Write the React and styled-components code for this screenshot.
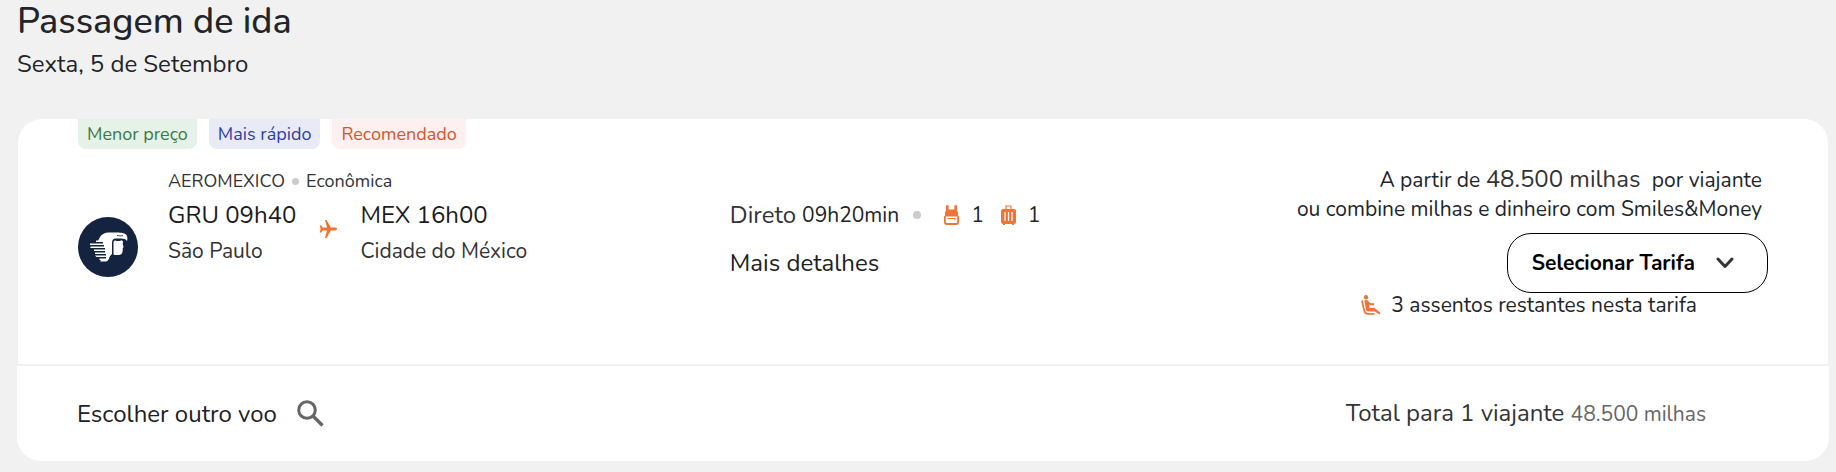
import React from "react";
import styled, { createGlobalStyle } from "styled-components";

const Global = createGlobalStyle`
  * { box-sizing: border-box; }
  body { margin: 0; background: #f1f1f1; color: #212529; font-family: Nunito, Lato, "Liberation Sans", sans-serif; }
  h1, h2, p { margin: 0; font-weight: 400; }
  svg { display: block; flex: none; }
`;

const Page = styled.main`
  padding: 0 7px 11px 17px;
`;
const Heading = styled.header`
  height: 119px;
`;
const Title = styled.h1`
  font-size: 36px;
  font-weight: 500;
  line-height: 43px;
`;
const Subtitle = styled.p`
  font-size: 24px;
  line-height: 43px;
`;
const Body = styled.section`
  min-height: 245px;
  margin: 0 1px;
  padding: 0 60px;
  background: #fff;
  border-radius: 24px 24px 0 0;
`;
const Badges = styled.div`
  display: flex;
  gap: 12px;
`;
const tones = {
  green: ["#e6f1e8", "#3b7a45"],
  blue: ["#e8eaf6", "#2d3fa5"],
  red: ["#fdf0f1", "#d4562c"],
};
const Badge = styled.span`
  padding: 0 9px;
  border-radius: 0 0 8px 8px;
  font-size: 18px;
  line-height: 30px;
  background: ${(p) => tones[p.$tone][0]};
  color: ${(p) => tones[p.$tone][1]};
`;
const Columns = styled.div`
  display: grid;
  grid-template-columns: 5fr 4fr 4fr;
  column-gap: 8px;
  padding-top: 16px;
`;
const Flight = styled.div`
  display: flex;
  gap: 30px;
  padding-top: 1px;
`;
const LogoBox = styled.div`
  padding-top: 51px;
`;
const Airline = styled.div`
  display: flex;
  align-items: center;
  font-size: 18px;
  line-height: 31px;
  color: #333;
`;
const Dot = styled.i`
  width: ${(p) => p.$size}px;
  height: ${(p) => p.$size}px;
  margin: 0 ${(p) => p.$after}px 0 ${(p) => p.$before}px;
  border-radius: 50%;
  background: #ccc;
`;
const Route = styled.div`
  display: flex;
  gap: 23px;
`;
const Time = styled.p`
  font-size: 24px;
  line-height: 36px;
  color: #1c1c1c;
`;
const City = styled.p`
  font-size: 21px;
  line-height: 36px;
  color: #333;
`;
const PlaneBox = styled.div`
  padding-top: 23px;
`;
const Details = styled.div`
  padding-top: 32px;
`;
const Line = styled.div`
  display: flex;
  align-items: center;
  line-height: 36px;
`;
const Stops = styled.span`
  font-size: 24px;
  color: #333;
  margin-right: 6px;
`;
const Small = styled.span`
  font-size: 21px;
`;
const Bag = styled.span`
  display: flex;
  align-items: center;
  gap: 12px;
  margin-right: 17px;
  font-size: 21px;
`;
const PlainLink = styled.a`
  display: inline-flex;
  align-items: center;
  gap: 20px;
  margin-top: ${(p) => p.$top || 0}px;
  font-size: 24px;
  line-height: 36px;
  color: #212121;
  text-decoration: none;
`;
const Price = styled.div`
  display: flex;
  flex-direction: column;
  align-items: flex-end;
`;
const PriceLine = styled.p`
  padding-right: 6px;
  font-size: 21px;
  line-height: 29px;
  white-space: nowrap;
`;
const Miles = styled.strong`
  margin-right: 6px;
  font-size: 24px;
  font-weight: 400;
  color: #333;
`;
const Select = styled.button`
  display: flex;
  align-items: center;
  gap: 21px;
  height: 60px;
  margin-top: 9px;
  padding: 0 33px 0 24px;
  border: 1px solid #000;
  border-radius: 24px;
  background: #fff;
  color: #000;
  font: 700 21px/30px Nunito, Lato, "Liberation Sans", sans-serif;
`;
const Seats = styled.p`
  display: flex;
  align-items: center;
  gap: 10px;
  padding-right: 71px;
  font-size: 21px;
  line-height: 24px;
`;
const Footer = styled.footer`
  display: flex;
  align-items: center;
  justify-content: space-between;
  min-height: 97px;
  padding: 0 123px 0 60px;
  border-top: 2px solid #f1f1f1;
  border-radius: 0 0 24px 24px;
  background: #fff;
`;
const Total = styled.p`
  font-size: 24px;
  line-height: 36px;
  color: #333;
`;
const TotalMiles = styled.span`
  font-size: 21px;
  color: #666;
`;

const Logo = () => (
  <svg width="60" height="60" viewBox="0 0 60 60" role="img" aria-label="Aeromexico">
    <circle cx="30" cy="30" r="30" fill="#14233f" />
    <path
      fill="#fff"
      d="M21 22c1-3 4-6 9-6.500h11c4 .2 7.500 1.500 8 3.500.5 2 .5 3 0 5-1-1.700-3-2.500-6-2.500h-5c-3 0-4 1.500-4 4.500v11c-1.500 1.500-2.500 2.500-3 4.500-.5 1.500-1.500 2.500-3 3h-6l1-1.500h-1.500v-1.500H28V40h-9.500l-1.500-1.500h11V37H17v-1.500h10V34H16v-1.500h11V31H12.500v-1.500H26V28H12v-1.500h13V25h-7v-1.500h2z"
    />
    <path fill="#fff" d="M35.500 25c0-1 1-1.500 2-1.500 1 .8 5 .8 6-.2l1.500 1-.3 3 1 3-.9.5c0 5-.8 7.200-3.800 7.200h-4c-1 0-1.500-.5-1.500-1.500z" />
    <path stroke="#14233f" strokeWidth=".8" fill="none" d="M39 18.500c2 .5 4 .5 6 .2" />
  </svg>
);
const Plane = () => (
  <svg width="18" height="18" viewBox="0 0 18 18" fill="#ee7536" aria-hidden="true">
    <path d="M6 0h1.600l4.200 7.500h4.700c2 0 2 3 0 3h-4.700L7.600 18H6l2-7.500H3.800L2.300 12.500H.7L1.600 9 .7 5.500h1.600l1.500 2H8z" />
  </svg>
);
const Backpack = () => (
  <svg width="15" height="20" viewBox="0 0 15 20" aria-hidden="true">
    <path fill="#ee7536" d="M2 .3h2.600V4.500h5.800V.3H13V5.500l1 2v3l1 1v5.500a3 3 0 0 1-3 3H3a3 3 0 0 1-3-3v-5.500l1-1v-3l1-2z" />
    <path fill="#fff" d="M1.800 11.500h11.400v5.500a1 1 0 0 1-1 1H2.800a1 1 0 0 1-1-1z" />
    <path fill="none" stroke="#ee7536" d="M3.500 13.500h7.500v1.800" />
  </svg>
);
const Suitcase = () => (
  <svg width="15" height="20" viewBox="0 0 15 20" aria-hidden="true">
    <path fill="none" stroke="#ee7536" strokeWidth="1.200" d="M5 5V1h5v4" />
    <path fill="#ee7536" d="M2 4h11a2 2 0 0 1 2 2v11a2 2 0 0 1-2 2v1h-2v-1H4v1H2v-1a2 2 0 0 1-2-2V6a2 2 0 0 1 2-2z" />
    <path stroke="#fff" strokeWidth="1.200" d="M4 7v9M7.500 7v9M11 7v9" />
  </svg>
);
const Seat = () => (
  <svg width="20" height="20" viewBox="0 0 20 20" fill="none" stroke="#ee7536" aria-hidden="true">
    <circle cx="5" cy="2.200" r="2.200" fill="#ee7536" stroke="none" />
    <path fill="#ee7536" stroke="none" d="M3.500 5.500c2-1 3.500 0 4.500 1.500 2 1.500 3 1.500 5 1v2c-2 .6-3.500.2-5-.6l.6 3.600H13c1 0 2 1 3 2l3.600 3-1.200 1.500-4.400-3H7.500C6 16.500 5 15.500 4.800 14z" />
    <path strokeWidth="1.700" d="M1 5.500 3 15c.5 2.500 1.500 3.800 4 3.800h6.500" />
  </svg>
);
const Chevron = () => (
  <svg width="18" height="12" viewBox="0 0 18 12" fill="none" stroke="#333" strokeWidth="3" aria-hidden="true">
    <path strokeLinecap="round" strokeLinejoin="round" d="m2 2 7 7.500L16 2" />
  </svg>
);
const Search = () => (
  <svg width="27" height="27" viewBox="0 0 27 27" fill="none" stroke="#666" strokeWidth="3" aria-hidden="true">
    <circle cx="10" cy="10" r="8.300" />
    <path d="m16 16 9.500 9.500" strokeWidth="3.400" />
  </svg>
);

export default function App() {
  return (
    <Page>
      <Global />
      <Heading>
        <Title>Passagem de ida</Title>
        <Subtitle>Sexta, 5 de Setembro</Subtitle>
      </Heading>
      <Body>
        <Badges>
          <Badge $tone="green">Menor preço</Badge>
          <Badge $tone="blue">Mais rápido</Badge>
          <Badge $tone="red">Recomendado</Badge>
        </Badges>
        <Columns>
          <Flight>
            <LogoBox><Logo /></LogoBox>
            <div>
              <Airline>
                AEROMEXICO
                <Dot $size={7} $before={7} $after={7} />
                Econômica
              </Airline>
              <Route>
                <div>
                  <Time>GRU 09h40</Time>
                  <City>São Paulo</City>
                </div>
                <PlaneBox><Plane /></PlaneBox>
                <div>
                  <Time>MEX 16h00</Time>
                  <City>Cidade do México</City>
                </div>
              </Route>
            </div>
          </Flight>
          <Details>
            <Line>
              <Stops>Direto</Stops>
              <Small>09h20min</Small>
              <Dot $size={8} $before={14} $after={23} />
              <Bag><Backpack />1</Bag>
              <Bag><Suitcase />1</Bag>
            </Line>
            <PlainLink href="#detalhes" $top={12}>Mais detalhes</PlainLink>
          </Details>
          <Price>
            <PriceLine>A partir de <Miles>48.500 milhas</Miles> por viajante</PriceLine>
            <PriceLine>ou combine milhas e dinheiro com Smiles&amp;Money</PriceLine>
            <Select type="button">Selecionar Tarifa<Chevron /></Select>
            <Seats><Seat />3 assentos restantes nesta tarifa</Seats>
          </Price>
        </Columns>
      </Body>
      <Footer>
        <PlainLink href="#voos">Escolher outro voo<Search /></PlainLink>
        <Total>Total para 1 viajante <TotalMiles>48.500 milhas</TotalMiles></Total>
      </Footer>
    </Page>
  );
}
